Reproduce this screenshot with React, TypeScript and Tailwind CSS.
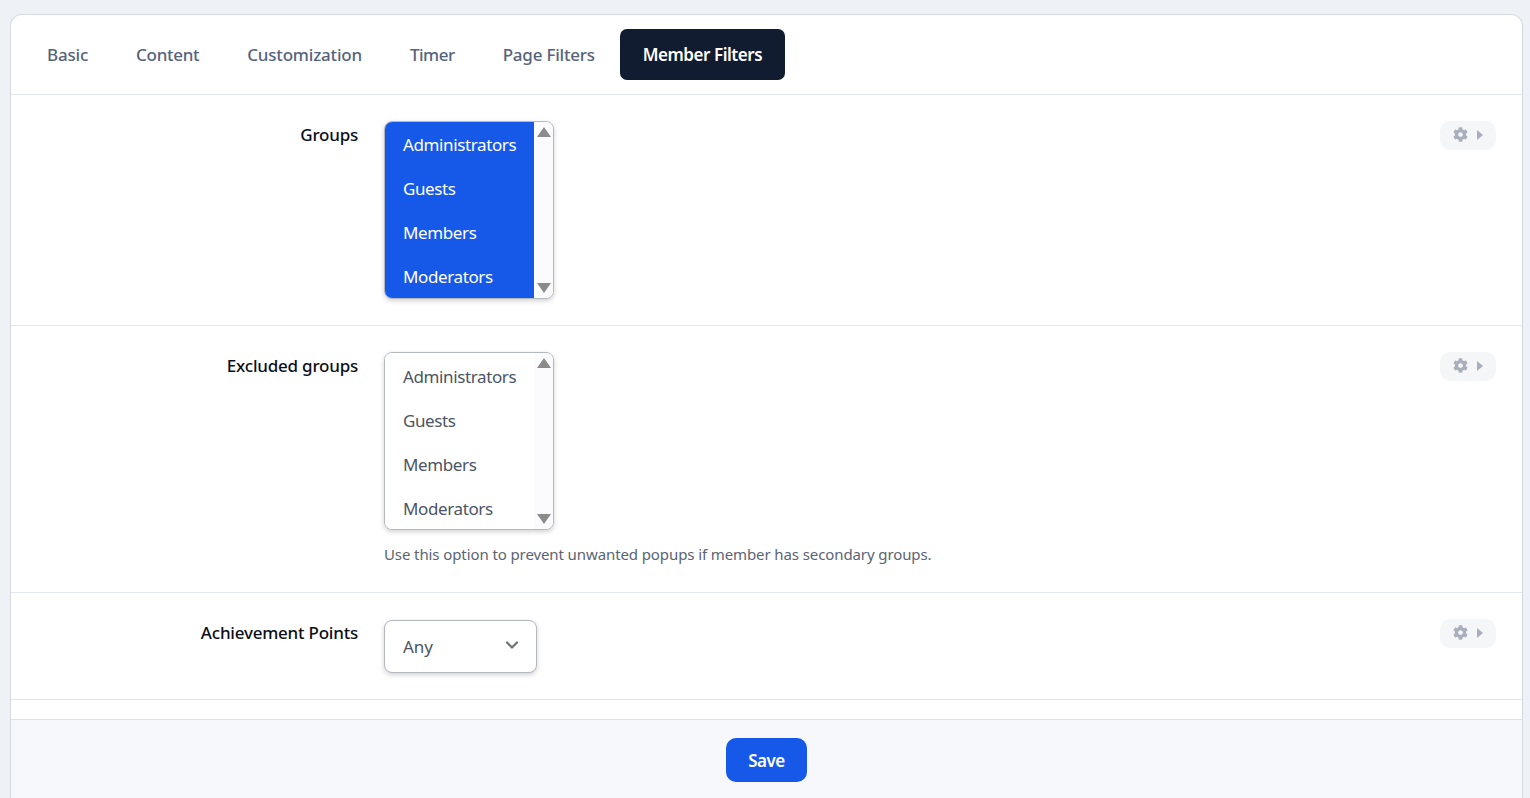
import { ChevronDown } from "lucide-react";

const tabs = [
  { name: "Basic", track: "tracking-[-0.2px]" },
  { name: "Content", track: "tracking-[-0.3px]" },
  { name: "Customization", track: "tracking-[-0.2px]" },
  { name: "Timer", track: "tracking-[-0.5px]" },
  { name: "Page Filters", track: "tracking-[-0.2px]" },
];
const groups = ["Administrators", "Guests", "Members", "Moderators"];

function RowToggle() {
  return (
    <div className="flex h-[29px] w-[56px] items-center gap-[9px] rounded-[10px] bg-[#f5f6f8] pb-[2px] pl-[13px]">
      <svg viewBox="0 0 512 512" className="h-[15px] w-[15px] fill-[#a9afbc]">
        <path d="M487.4 315.7l-42.6-24.6c4.3-23.2 4.3-47 0-70.2l42.6-24.6c4.9-2.8 7.1-8.6 5.5-14-11.1-35.6-30-67.8-54.7-94.6-3.8-4.1-10-5.1-14.8-2.3L380.8 110c-17.9-15.4-38.5-27.3-60.8-35.1V25.8c0-5.6-3.9-10.5-9.4-11.7-36.7-8.2-74.3-7.8-109.2 0-5.5 1.2-9.4 6.1-9.4 11.7V75c-22.2 7.9-42.8 19.8-60.8 35.1L88.7 85.5c-4.9-2.8-11-1.9-14.8 2.3-24.7 26.7-43.6 58.9-54.7 94.6-1.7 5.4.6 11.2 5.5 14L67.3 221c-4.3 23.2-4.3 47 0 70.2l-42.6 24.6c-4.9 2.8-7.1 8.6-5.5 14 11.1 35.6 30 67.8 54.7 94.6 3.8 4.1 10 5.1 14.8 2.3l42.6-24.6c17.9 15.4 38.5 27.3 60.8 35.1v49.2c0 5.6 3.9 10.5 9.4 11.7 36.7 8.2 74.3 7.8 109.2 0 5.5-1.2 9.4-6.1 9.4-11.7v-49.2c22.2-7.9 42.8-19.8 60.8-35.1l42.6 24.6c4.9 2.8 11 1.9 14.8-2.3 24.7-26.7 43.6-58.9 54.7-94.6 1.5-5.5-.7-11.3-5.6-14.1zM256 336c-44.1 0-80-35.9-80-80s35.9-80 80-80 80 35.9 80 80-35.9 80-80 80z" />
      </svg>
      <svg viewBox="0 0 6 10" className="h-[10px] w-[6px] fill-[#a9afbc]">
        <path d="M0 0l6 5-6 5z" />
      </svg>
    </div>
  );
}

function ListBox({ selected }: { selected: boolean }) {
  return (
    <div className="flex h-[178px] w-[170px] overflow-hidden rounded-[8px] border border-[#b4b8bf] bg-white shadow-[0_2px_5px_rgba(0,0,0,0.18)]">
      <ul className={selected ? "w-[149px] bg-[#1659e9] pt-[1px] text-white" : "w-[149px] bg-white pt-[2px] text-[#4b5563]"}>
        {groups.map((g) => (
          <li key={g} className="flex h-[44px] items-center pl-[18px] text-[17px] tracking-[-0.38px]">
            {g}
          </li>
        ))}
      </ul>
      <div className="flex flex-1 flex-col items-center justify-between bg-[#fbfbfd] py-[5px]">
        <svg viewBox="0 0 14 10" className="h-[10px] w-[14px] fill-[#8b8b8b]">
          <path d="M7 0l7 10H0z" />
        </svg>
        <svg viewBox="0 0 14 10" className="h-[10px] w-[14px] fill-[#8b8b8b]">
          <path d="M0 0h14L7 10z" />
        </svg>
      </div>
    </div>
  );
}

function Row({ label, children, h }: { label: string; children: React.ReactNode; h: string }) {
  return (
    <div className={`flex border-b border-[#e5e7ef] pt-[26px] pr-[26px] ${h}`}>
      <label className="w-[347px] pt-[1px] text-right text-[17px] leading-[26px] font-medium tracking-[-0.22px] text-[#0b0f19]">{label}</label>
      <div className="ml-[26px] flex-1">{children}</div>
      <RowToggle />
    </div>
  );
}

export default function App() {
  return (
    <div className="h-[798px] overflow-hidden bg-[#eef2f7] pt-[14px] pr-[7px] pl-[10px] font-['Noto_Sans',sans-serif]">
      <div className="flex h-[784px] flex-col overflow-hidden rounded-t-[12px] border border-b-0 border-[#d5d9e2] bg-white">
        <div className="flex h-[80px] shrink-0 items-center gap-[2px] border-b border-[#e5e7ef] pl-[13px]">
          {tabs.map((t) => (
            <button key={t.name} className={`h-[51px] px-[23px] pt-[1px] text-[17px] font-medium text-[#56637a] ${t.track}`}>
              {t.name}
            </button>
          ))}
          <button className="h-[51px] w-[165px] rounded-[7px] bg-[#111c30] pt-[1px] text-[17px] font-semibold tracking-[-0.45px] text-white">
            Member Filters
          </button>
        </div>

        <Row label="Groups" h="h-[231px]">
          <ListBox selected />
        </Row>
        <Row label="Excluded groups" h="h-[267px]">
          <ListBox selected={false} />
          <p className="mt-[14px] text-[15px] leading-[20px] tracking-[-0.1px] text-[#5a6472]">
            Use this option to prevent unwanted popups if member has secondary groups.
          </p>
        </Row>
        <Row label="Achievement Points" h="h-[107px]">
          <div className="mt-[1px] flex h-[53px] w-[153px] items-center justify-between rounded-[8px] border border-[#b4b8bf] bg-white pr-[14px] pl-[18px] text-[17px] text-[#4b5563] shadow-[0_2px_5px_rgba(0,0,0,0.18)]">
            Any
            <ChevronDown className="mb-[4px] h-[20px] w-[20px] text-[#6b6f76]" strokeWidth={2.6} />
          </div>
        </Row>

        <div className="h-[19px] shrink-0" />
        <div className="flex flex-1 justify-center border-t border-[#dfe2ea] bg-[#f6f8fc] pt-[18px]">
          <button className="h-[44px] w-[81px] rounded-[10px] bg-[#1659e9] pt-[1px] text-[17px] font-semibold tracking-[-0.5px] text-white">
            Save
          </button>
        </div>
      </div>
    </div>
  );
}
